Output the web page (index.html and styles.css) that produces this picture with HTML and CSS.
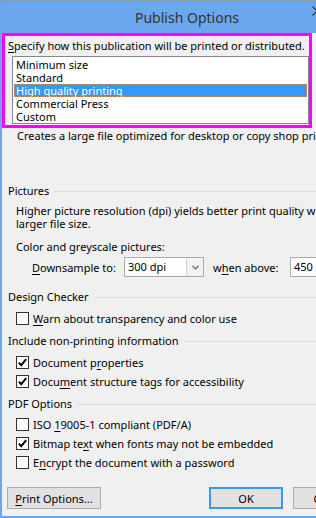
FILE: index.html
```html
<!DOCTYPE html>
<html lang="en">
<head>
<meta charset="utf-8">
<title>Publish Options</title>
<link rel="stylesheet" href="styles.css">
</head>
<body>
<div class="window">
  <div class="titlebar">
    <span class="title">Publish Options</span>
    <svg class="close" width="10" height="10" viewBox="0 0 10 10"><path d="M0.5 0.5 L9.5 9.5 M9.5 0.5 L0.5 9.5" stroke="#333" stroke-width="1.2" fill="none"/></svg>
  </div>
  <div class="content">
    <div class="highlight">
      <div class="prompt"><u>S</u>pecify how this publication will be printed or distributed.</div>
      <ul class="listbox">
        <li>Minimum size</li>
        <li>Standard</li>
        <li class="selected">High quality printing</li>
        <li>Commercial Press</li>
        <li>Custom</li>
      </ul>
    </div>
    <p class="desc">Creates a large file optimized for desktop or copy shop printing.</p>

    <div class="group-head head-pictures"><span>Pictures</span></div>
    <p class="text">Higher picture resolution (dpi) yields better print quality with a<br>larger file size.</p>
    <p class="sublabel">Color and greyscale pictures:</p>
    <div class="ds-row">
      <span class="ds-label"><u>D</u>ownsample to:</span>
      <div class="select">
        <span class="value">300 dpi</span>
        <span class="arrow"><svg width="7" height="5" viewBox="0 0 7 5"><polyline points="0.5,0.8 3.5,3.8 6.5,0.8" stroke="#5a5a5a" stroke-width="1.2" fill="none"/></svg></span>
      </div>
      <span class="when-label">w<u>h</u>en above:</span>
      <div class="input">450 dpi</div>
    </div>

    <div class="group-head head-design"><span>Design Checker</span></div>
    <div class="check first"><span class="box"></span><span><u>W</u>arn about transparency and color use</span></div>

    <div class="group-head head-include"><span>Include non-printing information</span></div>
    <div class="check first"><span class="box checked"><svg width="11" height="11" viewBox="0 0 11 11"><polyline points="1.8,5.6 4.2,8.2 9.2,2.2" stroke="#000" stroke-width="1.9" fill="none"/></svg></span><span>Document p<u>r</u>operties</span></div>
    <div class="check"><span class="box checked"><svg width="11" height="11" viewBox="0 0 11 11"><polyline points="1.8,5.6 4.2,8.2 9.2,2.2" stroke="#000" stroke-width="1.9" fill="none"/></svg></span><span>Docu<u>m</u>ent structure tags for accessibility</span></div>

    <div class="group-head head-pdf"><span>PDF Options</span></div>
    <div class="check first-pdf"><span class="box"></span><span>ISO <u>1</u>9005-1 compliant (PDF/A)</span></div>
    <div class="check"><span class="box checked"><svg width="11" height="11" viewBox="0 0 11 11"><polyline points="1.8,5.6 4.2,8.2 9.2,2.2" stroke="#000" stroke-width="1.9" fill="none"/></svg></span><span>Bitmap te<u>x</u>t when fonts may not be embedded</span></div>
    <div class="check"><span class="box"></span><span>E<u>n</u>crypt the document with a password</span></div>

    <div class="buttons">
      <div class="btn btn-print"><span><u>P</u>rint Options...</span></div>
      <div class="btn btn-ok"><span>OK</span></div>
      <div class="btn btn-cancel"><span>Cancel</span></div>
    </div>
  </div>
</div>
</body>
</html>
```
FILE: styles.css
```css
* { box-sizing: border-box; margin: 0; padding: 0; }
html, body { width: 316px; height: 518px; overflow: hidden; }
body {
  font-family: "Noto Sans", "Open Sans", sans-serif;
  font-size: 11px;
  color: #000;
  background: #f0f0f0;
}
u { text-decoration: underline; text-underline-offset: 2px; }

.window {
  position: relative;
  width: 316px;
  height: 518px;
  background: #f0f0f0;
  border-left: 2px solid #6aa7ee;
  border-bottom: 2px solid #6aa7ee;
  overflow: hidden;
  white-space: nowrap;
}

.titlebar {
  position: relative;
  height: 33px;
  background: #6aa7ee;
  border-top: 1px solid #8a98a8;
  display: flex;
  align-items: center;
  padding-left: 133px;
}
.title { font-size: 14px; color: #333; }
.close { position: absolute; left: 310px; top: 5px; }

.highlight {
  width: 310px;
  height: 95px;
  border: 3px solid #ff00ff;
}
.prompt { margin-top: 2px; padding-left: 3px; line-height: 16px; }
.listbox {
  list-style: none;
  margin: 2px 0 0 7px;
  height: 68px;
  background: #fff;
  border: 1px solid #828790;
  padding: 1px 1px 0 1px;
}
.listbox li { height: 13px; line-height: 13px; padding-left: 2px; }
.listbox li.selected {
  background: #3399ff;
  color: #fff;
  outline: 1px dotted #b9905e;
  outline-offset: -1px;
}

.desc { margin-top: 1px; padding-left: 15px; line-height: 14px; }

.group-head {
  display: flex;
  align-items: center;
  padding-left: 6px;
  line-height: 14px;
}
.group-head::after {
  content: "";
  flex: 1;
  height: 1px;
  background: #dcdcdc;
  margin-left: 5px;
  margin-top: 1px;
}
.head-pictures { margin-top: 41px; }
.head-design { margin-top: 13px; }
.head-include { margin-top: 6px; }
.head-pdf { margin-top: 6px; }

.text { margin-top: 6px; padding-left: 14px; line-height: 13px; }
.sublabel { margin-top: 10px; padding-left: 14px; line-height: 13px; }

.ds-row {
  display: flex;
  align-items: center;
  height: 20px;
  margin-top: 4px;
  padding-left: 30px;
}
.ds-label { width: 92px; flex-shrink: 0; }
.select {
  display: flex;
  width: 80px;
  height: 20px;
  flex-shrink: 0;
  background: #fff;
  border: 1px solid #acacac;
}
.select .value { flex: 1; padding-left: 3px; line-height: 18px; }
.select .arrow {
  width: 17px;
  border-left: 1px solid #d4d4d4;
  background: #f2f2f2;
  display: flex;
  align-items: center;
  justify-content: center;
}
.when-label { margin-left: 9px; width: 77px; flex-shrink: 0; }
.input {
  width: 60px;
  height: 20px;
  flex-shrink: 0;
  background: #fff;
  border: 1px solid #acacac;
  padding-left: 3px;
  line-height: 18px;
}

.check {
  display: flex;
  align-items: center;
  height: 19px;
  padding-left: 14px;
}
.check.first { margin-top: 5px; }
.check.first-pdf { margin-top: 4px; }
.box {
  width: 13px;
  height: 13px;
  flex-shrink: 0;
  border: 1px solid #333;
  background: #fff;
  margin-right: 4px;
  display: flex;
  align-items: center;
  justify-content: center;
}

.buttons { display: flex; margin-top: 15px; padding-left: 5px; }
.btn {
  height: 22px;
  border: 1px solid #adadad;
  background: #e1e1e1;
  display: flex;
  align-items: center;
  justify-content: center;
  flex-shrink: 0;
}
.btn-print { width: 94px; }
.btn-ok { width: 74px; margin-left: 108px; border-color: #3399ff; box-shadow: inset 0 0 0 1px #3399ff; }
.btn-cancel { width: 75px; margin-left: 10px; }
```
